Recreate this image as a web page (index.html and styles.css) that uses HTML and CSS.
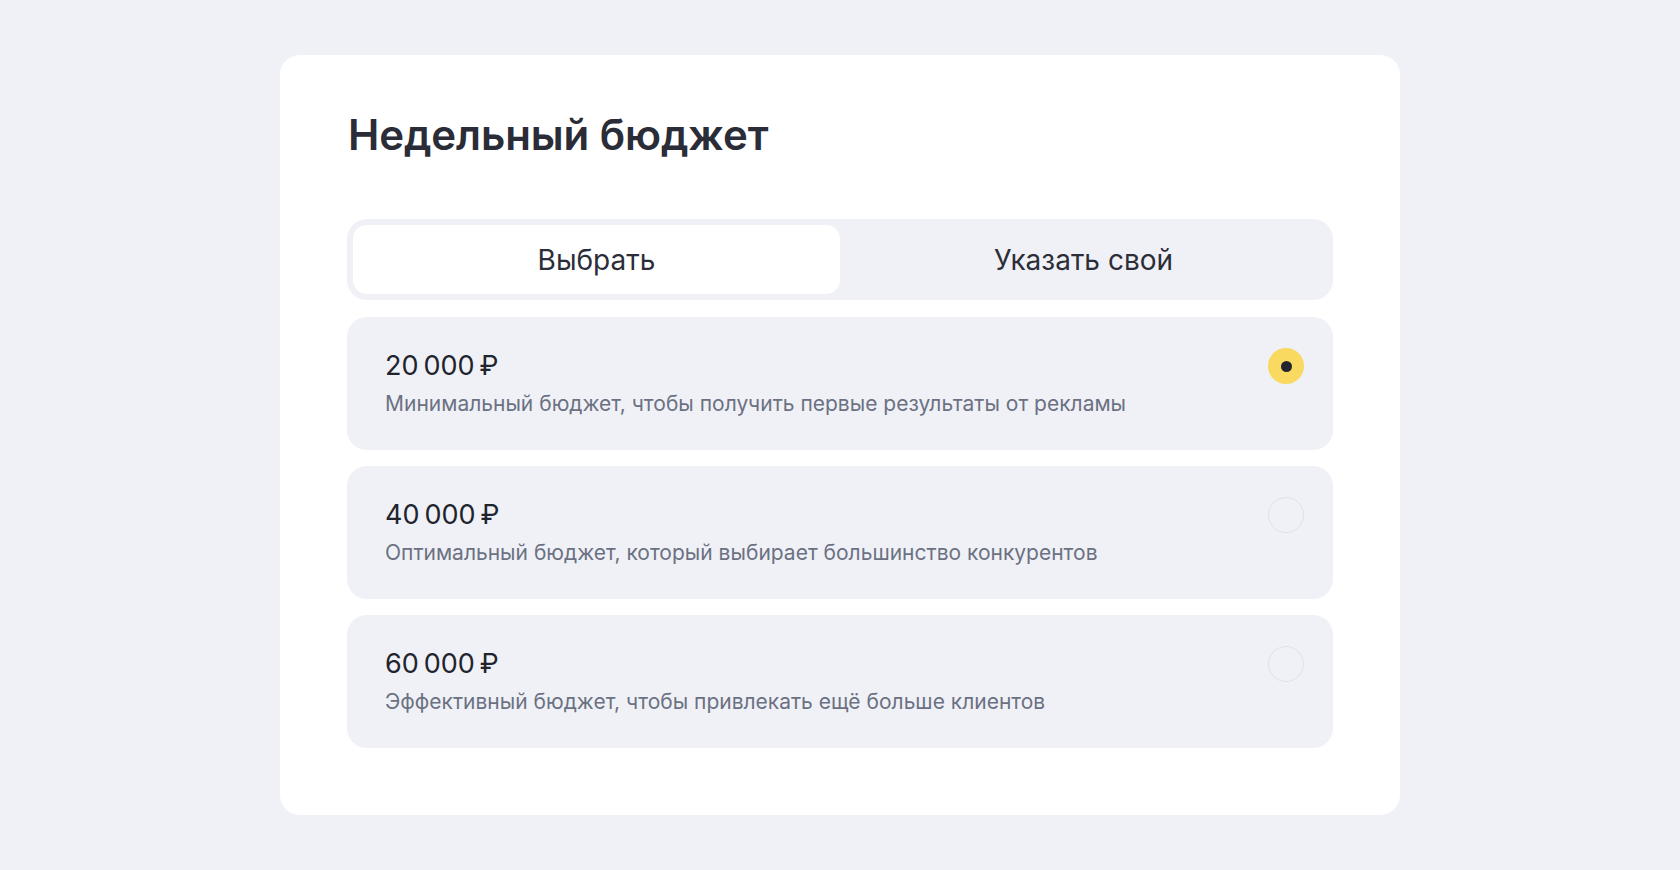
FILE: index.html
```html
<!DOCTYPE html>
<html lang="ru">
<head>
<meta charset="utf-8">
<title>Недельный бюджет</title>
<link rel="stylesheet" href="styles.css">
</head>
<body>
<main class="page">
  <section class="card">
    <h1 class="title">Недельный бюджет</h1>
    <div class="tabs">
      <button class="tab tab-active">Выбрать</button>
      <button class="tab">Указать свой</button>
    </div>
    <div class="options">
      <label class="option">
        <div class="option-text">
          <div class="price">20&#8239;000&#8239;₽</div>
          <div class="desc">Минимальный бюджет, чтобы получить первые результаты от рекламы</div>
        </div>
        <span class="radio radio-checked"><span class="dot"></span></span>
      </label>
      <label class="option">
        <div class="option-text">
          <div class="price">40&#8239;000&#8239;₽</div>
          <div class="desc">Оптимальный бюджет, который выбирает большинство конкурентов</div>
        </div>
        <span class="radio"></span>
      </label>
      <label class="option">
        <div class="option-text">
          <div class="price">60&#8239;000&#8239;₽</div>
          <div class="desc">Эффективный бюджет, чтобы привлекать ещё больше клиентов</div>
        </div>
        <span class="radio"></span>
      </label>
    </div>
  </section>
</main>
</body>
</html>
```
FILE: styles.css
```css
* { box-sizing: border-box; }
html, body { margin: 0; padding: 0; }
body {
  background: #f0f1f6;
  font-family: Inter, "Noto Sans", sans-serif;
  color: #21242d;
}
.page {
  width: 1680px;
  height: 870px;
  display: flex;
  align-items: center;
  justify-content: center;
}
.card {
  width: 1120px;
  height: 760px;
  background: #ffffff;
  border-radius: 20px;
  padding: 55px 67px 66px;
}
.title {
  margin: 0 0 0 1px;
  font-size: 42px;
  line-height: 50px;
  font-weight: 600;
  letter-spacing: -0.1px;
  color: #2a2d38;
}
.tabs {
  margin-top: 59px;
  height: 81px;
  padding: 6px;
  display: grid;
  grid-template-columns: 1fr 1fr;
  background: #f0f1f6;
  border-radius: 20px;
}
.tab {
  border: 0;
  background: transparent;
  border-radius: 14px;
  font-family: inherit;
  font-size: 28px;
  color: #2b2e38;
  display: flex;
  align-items: center;
  justify-content: center;
  padding: 0;
}
.tab-active { background: #ffffff; }
.options {
  margin-top: 17px;
  display: flex;
  flex-direction: column;
  gap: 16px;
}
.option {
  height: 133px;
  background: #f0f1f6;
  border-radius: 20px;
  padding: 31px 29px 0 38px;
  display: flex;
  justify-content: space-between;
  align-items: flex-start;
}
.price {
  font-size: 27px;
  line-height: 36px;
  color: #21242d;
}
.desc {
  margin-top: 6px;
  font-size: 21px;
  line-height: 28px;
  color: #6b7183;
}
.radio {
  width: 36px;
  height: 36px;
  border-radius: 50%;
  border: 1.5px solid #e0e1e7;
  display: flex;
  align-items: center;
  justify-content: center;
  flex: none;
}
.radio-checked {
  border: 0;
  background: #f9d960;
}
.dot {
  width: 11px;
  height: 11px;
  border-radius: 50%;
  background: #22252f;
}
```
